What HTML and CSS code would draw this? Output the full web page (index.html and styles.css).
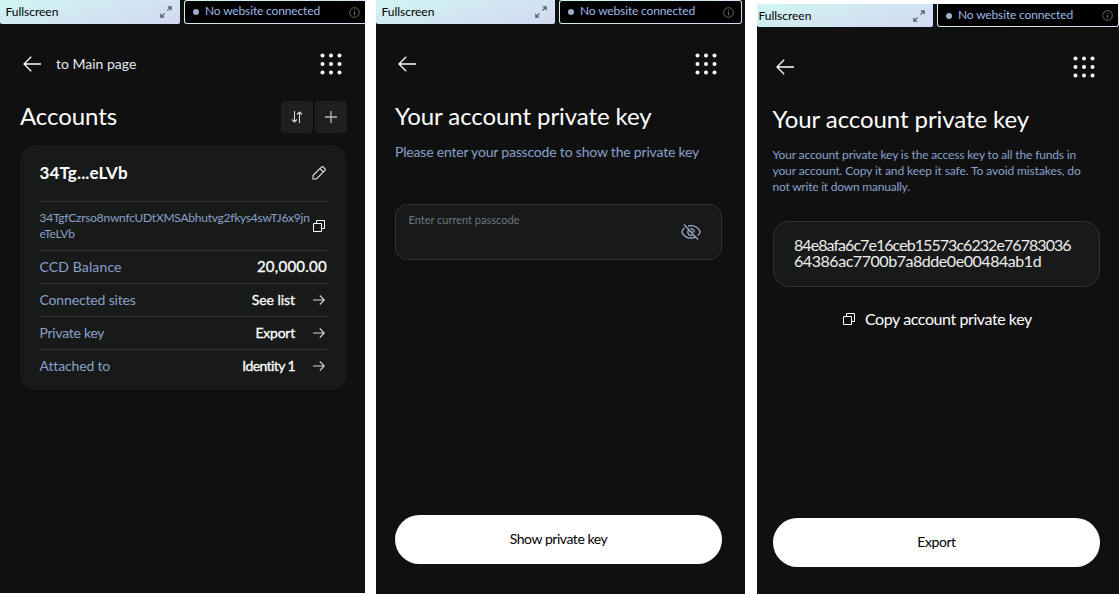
FILE: index.html
```html
<!DOCTYPE html>
<html lang="en">
<head>
<meta charset="utf-8">
<title>Wallet accounts</title>
<link rel="stylesheet" href="styles.css">
</head>
<body>
<svg class="defs" width="0" height="0">
  <symbol id="expand" viewBox="0 0 12 12"><path d="M7.4 4.6 11 1M7.8.8h3.4v3.4M4.6 7.4 1 11M4.2 11.2H.8V7.8" fill="none" stroke="#4c6068" stroke-width="1.2"/></symbol>
  <symbol id="info" viewBox="0 0 10 10"><circle cx="5" cy="5" r="4.4" fill="none" stroke="#666" stroke-width=".9"/><path d="M5 4.3v3.2M5 2.5v1" stroke="#666" stroke-width="1"/></symbol>
  <symbol id="back" viewBox="0 0 18 16"><path d="M18 8H1M8.2.8 1 8l7.2 7.2" fill="none" stroke="#fff" stroke-width="1.3"/></symbol>
  <symbol id="dots" viewBox="0 0 22 22"><g fill="#fff"><circle cx="2.5" cy="2.5" r="2"/><circle cx="11" cy="2.5" r="2"/><circle cx="19.5" cy="2.5" r="2"/><circle cx="2.5" cy="11" r="2"/><circle cx="11" cy="11" r="2"/><circle cx="19.5" cy="11" r="2"/><circle cx="2.5" cy="19.5" r="2"/><circle cx="11" cy="19.5" r="2"/><circle cx="19.5" cy="19.5" r="2"/></g></symbol>
  <symbol id="copy" viewBox="0 0 12 12"><path d="M.5 3.5h8v8h-8zM3.5 3.5v-3h8v8h-3" fill="none" stroke="#fff"/></symbol>
  <symbol id="arrow" viewBox="0 0 12 10"><path d="M0 5h11.3M6.8.5 11.3 5 6.8 9.5" fill="none" stroke="#d5d6d6" stroke-width="1.1"/></symbol>
</svg>
<main class="screens">
  <section class="screen screen-accounts">
    <div class="topbar">
      <div class="full"><span>Fullscreen</span><svg width="12" height="12"><use href="#expand"/></svg></div>
      <div class="site"><i class="dot"></i><span>No website connected</span><svg width="11" height="11"><use href="#info"/></svg></div>
    </div>
    <div class="nav"><svg width="18" height="16"><use href="#back"/></svg><span class="nav-label">to Main page</span><svg class="menu" width="22" height="22"><use href="#dots"/></svg></div>
    <div class="heading">
      <h1>Accounts</h1>
      <div class="tools">
        <button class="tool"><svg width="12" height="12" viewBox="0 0 12 12"><path d="M3.5 0v11M1 8.5 3.5 11 6 8.5M8.5 12V1M6 3.5 8.5 1 11 3.5" fill="none" stroke="#d4d4d4" stroke-width="1.1"/></svg></button>
        <button class="tool"><svg width="12" height="12" viewBox="0 0 12 12"><path d="M6 0v12M0 6h12" fill="none" stroke="#bbb" stroke-width="1.3"/></svg></button>
      </div>
    </div>
    <div class="card">
      <div class="row name"><b>34Tg...eLVb</b><svg width="14" height="14" viewBox="0 0 14 14"><path d="M1 13V9.5L9.600.9Q10.400.3 11.200 1L13 2.800Q13.700 3.600 13 4.400L4.400 13ZM8 2.600 11.400 6" fill="none" stroke="#e6e6e6" stroke-width="1.1"/></svg></div>
      <div class="row address"><span>34TgfCzrso8nwnfcUDtXMSAbhutvg2fkys4swTJ6x9jn<br>eTeLVb</span><svg width="12" height="12"><use href="#copy"/></svg></div>
      <div class="row"><span class="wide">CCD Balance</span><em class="amount">20,000.00</em></div>
      <div class="row"><span>Connected sites</span><em class="list">See list</em><svg width="12" height="10"><use href="#arrow"/></svg></div>
      <div class="row"><span class="tight">Private key</span><em>Export</em><svg width="12" height="10"><use href="#arrow"/></svg></div>
      <div class="row"><span>Attached to</span><em class="identity">Identity 1</em><svg width="12" height="10"><use href="#arrow"/></svg></div>
    </div>
  </section>
  <section class="screen screen-passcode">
    <div class="topbar">
      <div class="full"><span>Fullscreen</span><svg width="12" height="12"><use href="#expand"/></svg></div>
      <div class="site"><i class="dot"></i><span>No website connected</span><svg width="11" height="11"><use href="#info"/></svg></div>
    </div>
    <div class="nav"><svg width="18" height="16"><use href="#back"/></svg><svg class="menu" width="22" height="22"><use href="#dots"/></svg></div>
    <div class="heading"><h1>Your account private key</h1></div>
    <p class="prompt">Please enter your passcode to show the private key</p>
    <div class="field"><label>Enter current passcode</label><svg width="20" height="16" viewBox="0 0 20 16"><path d="M3.4 3.8Q1.400 5.600.8 8 3.500 14.200 10 14.200 12.300 14.200 14.300 13.200M7 2.100Q8.400 1.700 10 1.700 16.500 1.700 19.200 8 18.500 10 16.800 11.600M7.400 6Q6 8.800 8 10.700 9.500 12 11.700 11.200M9.400 4.600Q13.200 4.800 13.200 8.400M10 7.200 11.500 9M3 .5 17 15.600" fill="none" stroke="#9caec9" stroke-width="1.3"/></svg></div>
    <button class="primary">Show private key</button>
  </section>
  <section class="screen screen-export">
    <div class="topbar">
      <div class="full"><span>Fullscreen</span><svg width="12" height="12"><use href="#expand"/></svg></div>
      <div class="site"><i class="dot"></i><span>No website connected</span><svg width="11" height="11"><use href="#info"/></svg></div>
    </div>
    <div class="nav"><svg width="18" height="16"><use href="#back"/></svg><svg class="menu" width="22" height="22"><use href="#dots"/></svg></div>
    <div class="heading"><h1>Your account private key</h1></div>
    <p class="note"><span>Your account private key is the access key to all the funds in</span><br><span class="loose">your account. Copy it and keep it safe. To avoid mistakes, do</span><br><span class="snug">not write it down manually.</span></p>
    <div class="key"><span class="key-head">84e8afa6c7e16ceb15573c6232e76783036</span><br>64386ac7700b7a8dde0e00484ab1d</div>
    <div class="copy"><svg width="12" height="12"><use href="#copy"/></svg><span>Copy account private key</span></div>
    <button class="primary">Export</button>
  </section>
</main>
</body>
</html>
```
FILE: styles.css
```css
* { box-sizing: border-box; }
body { margin: 0; background: #fff; font-family: Lato, "Liberation Sans", sans-serif; color: #fff; }
.defs { display: block; width: 0; height: 0; }
.screens { display: flex; align-items: flex-start; height: 594px; overflow: hidden; }
.screen { background: #101010; display: flex; flex-direction: column; flex: none; overflow: hidden; }
.screen-accounts { width: 365px; height: 593px; margin-right: 11px; }
.screen-passcode { width: 369px; height: 594px; margin-right: 12px; }
.screen-export { width: 362px; height: 590px; margin-top: 4px; }
svg { flex: none; }

.topbar { display: flex; gap: 4px; height: 24px; flex: none; }
.full { width: 180px; padding: 0 8px 0 5.5px; display: flex; align-items: center; justify-content: space-between; background: linear-gradient(165deg, #d0f5f3, #d3d9f2); border-radius: 0 0 2px 2px; color: #000; font-size: 12px; letter-spacing: -.03px; }
.full span { padding-bottom: 2px; }
.site { flex: 1; background: linear-gradient(#000, #000) padding-box, linear-gradient(165deg, #d0f5f3, #d3d9f2) border-box; border: 1px solid transparent; border-radius: 3px; display: flex; align-items: center; padding: 0 5px 2px 8px; color: #9fb7e4; font-size: 12px; letter-spacing: -.15px; }
.site span { padding-bottom: 1px; }
.site svg { margin: 2px 0 0 auto; }
.dot { width: 6px; height: 6px; border-radius: 50%; background: #9caec9; margin: 2px 6px 0 0; }
.screen-accounts .site { border-right: 0; border-radius: 3px 0 0 3px; }
.screen-passcode .topbar { padding-right: 3px; }
.screen-passcode .full { width: 179px; }
.screen-passcode .site { padding-right: 7px; }
.screen-export .topbar { height: 23px; }
.screen-export .full { width: 176px; padding-left: 1.5px; }
.screen-export .full span { padding-bottom: 1px; }
.screen-export .site { border-top: 0; border-radius: 0 0 3px 3px; padding-bottom: 1px; }

.nav { display: flex; align-items: center; height: 22px; margin: 29px 23px 0 23px; flex: none; }
.nav-label { margin-left: 15px; padding-bottom: 2px; font-size: 14px; color: #e4eaf3; }
.menu { margin-left: auto; }
.screen-passcode .nav { margin: 29px 28px 0 22px; }
.screen-export .nav { margin: 29px 24px 0 19px; }

.heading { display: flex; justify-content: space-between; align-items: center; height: 32px; margin: 26px 18px 0 20px; flex: none; }
h1 { margin: 0; padding-bottom: 2px; font-size: 24px; font-weight: 400; line-height: 32px; letter-spacing: -.08px; white-space: nowrap; }
.screen-passcode .heading { margin: 26px 0 0 19px; }
.screen-export .heading { margin: 26px 0 0 15.5px; }
.tools { display: flex; gap: 2px; }
.tool { width: 32px; height: 32px; border: 0; border-radius: 4px; background: #1f1f1f; padding: 0; display: grid; place-items: center; }

.card { margin: 12px 18px 0 20px; height: 245px; border-radius: 16px; background: #181a19; padding: 0 20px 0 19.5px; font-size: 14px; }
.row { height: 33px; display: flex; align-items: center; border-top: 1px solid #313533; color: #88a1cb; letter-spacing: -.15px; white-space: nowrap; }
.row > span, .row > em, .row > b { padding-bottom: 2px; }
.row .wide { letter-spacing: .13px; }
.row .tight { letter-spacing: -.27px; }
.row em { font-style: normal; color: #fff; margin-left: auto; letter-spacing: -.25px; -webkit-text-stroke: .3px #fff; }
.row em + svg { margin: 0 2px 0 18px; }
.row .amount { font-size: 15px; letter-spacing: .25px; }
.row .list { letter-spacing: -.05px; }
.row .identity { letter-spacing: -.6px; }
.row.name { height: 56px; border: 0; color: #fff; font-size: 17px; letter-spacing: .15px; justify-content: space-between; }
.row.name svg { margin-right: 1px; }
.row.address { height: 49px; font-size: 12px; line-height: 16px; letter-spacing: -.25px; justify-content: space-between; }
.row.address span { padding-bottom: 0; }
.row.address svg { margin-right: 2px; }

.prompt { margin: 10px 0 0 19px; font-size: 14px; line-height: 17px; letter-spacing: -.19px; color: #88a1cb; white-space: nowrap; }
.field { width: 327px; height: 56px; margin: 44px 0 0 19px; padding: 7px 20px 0 12.5px; display: flex; justify-content: space-between; border: 1px solid #303433; border-radius: 12px; background: #181a19; color: #6f7780; font-size: 11px; line-height: 15px; }
.field svg { margin-top: 12px; }
.primary { width: 327px; height: 49px; margin: auto 0 30px 19px; padding: 0 0 2px; border: 0; border-radius: 25px; background: #fff; color: #000; font: 14px Lato, sans-serif; letter-spacing: -.45px; flex: none; }
.screen-export .primary { margin: auto 0 27px 16px; }

.note { margin: 11px 0 0 15.5px; font-size: 12px; line-height: 16px; letter-spacing: -.15px; color: #88a1cb; white-space: nowrap; }
.note .loose { letter-spacing: -.1px; }
.note .snug { letter-spacing: -.22px; }
.key { width: 327px; height: 66px; margin: 26px 0 0 16px; padding: 15px 20px; border: 1px solid #303433; border-radius: 16px; background: #181a19; font-size: 16px; line-height: 16px; letter-spacing: -.45px; color: #eee; white-space: nowrap; }
.key-head { letter-spacing: -.94px; }
.copy { display: flex; align-items: center; height: 20px; margin: 22px 0 0 86px; gap: 10px; font-size: 16px; letter-spacing: -.42px; white-space: nowrap; }
.copy span { padding-bottom: 2px; }
```
